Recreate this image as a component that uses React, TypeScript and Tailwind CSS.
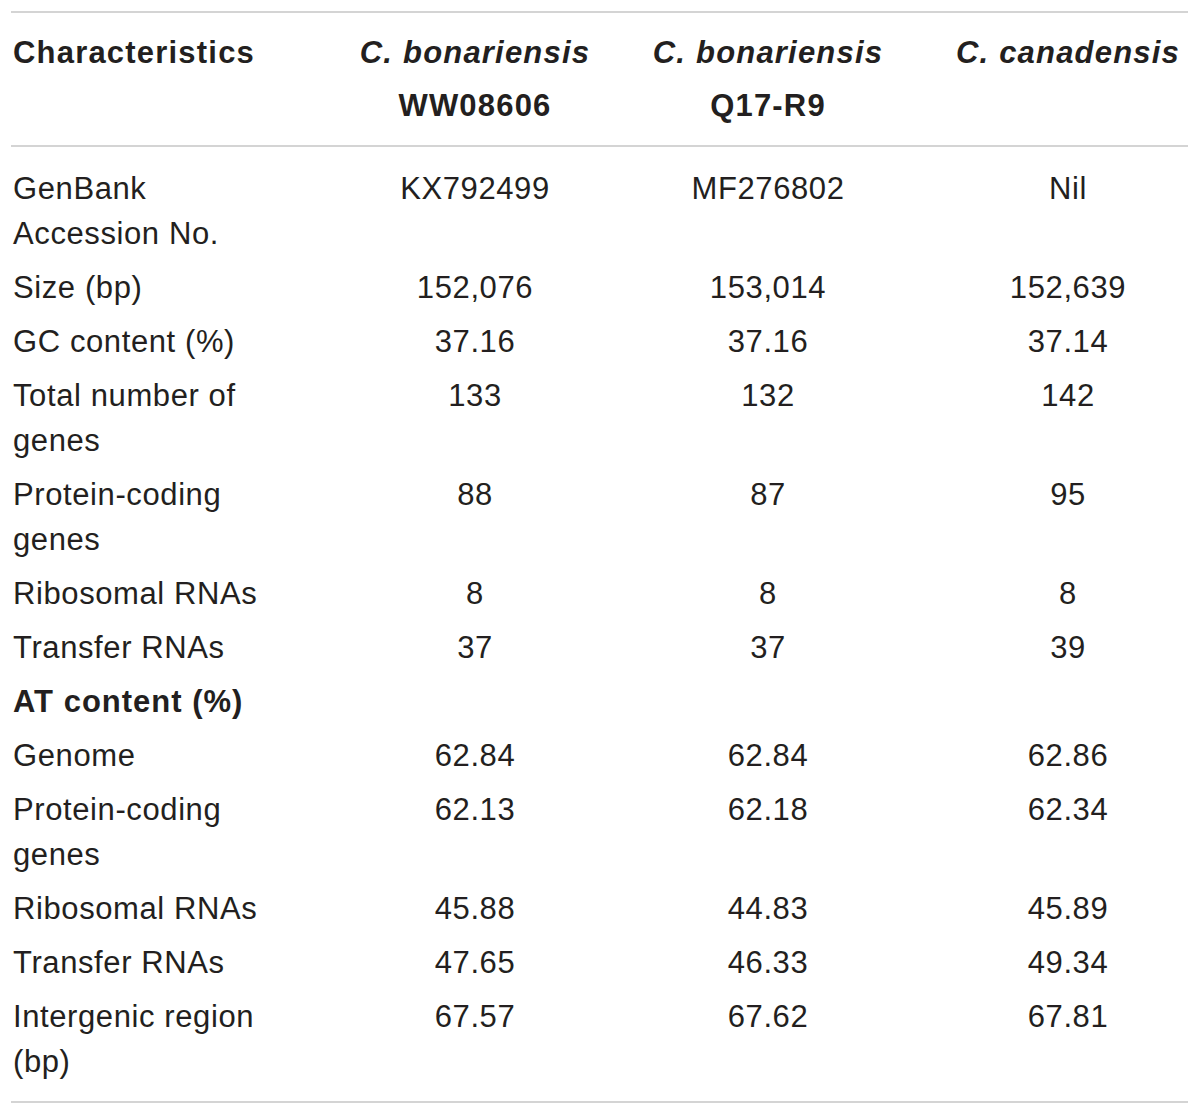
const rows: { label: string[]; vals: string[]; bold?: boolean }[] = [
  { label: ['GenBank', 'Accession No.'], vals: ['KX792499', 'MF276802', 'Nil'] },
  { label: ['Size (bp)'], vals: ['152,076', '153,014', '152,639'] },
  { label: ['GC content (%)'], vals: ['37.16', '37.16', '37.14'] },
  { label: ['Total number of', 'genes'], vals: ['133', '132', '142'] },
  { label: ['Protein-coding', 'genes'], vals: ['88', '87', '95'] },
  { label: ['Ribosomal RNAs'], vals: ['8', '8', '8'] },
  { label: ['Transfer RNAs'], vals: ['37', '37', '39'] },
  { label: ['AT content (%)'], vals: ['', '', ''], bold: true },
  { label: ['Genome'], vals: ['62.84', '62.84', '62.86'] },
  { label: ['Protein-coding', 'genes'], vals: ['62.13', '62.18', '62.34'] },
  { label: ['Ribosomal RNAs'], vals: ['45.88', '44.83', '45.89'] },
  { label: ['Transfer RNAs'], vals: ['47.65', '46.33', '49.34'] },
  { label: ['Intergenic region', '(bp)'], vals: ['67.57', '67.62', '67.81'] },
];

const grid = 'grid grid-cols-[319px_290px_296px_272px]';

export default function App() {
  return (
    <div className="min-h-[1116px] bg-white pt-[11px] pl-[11px] text-[#231f20] text-[31px] tracking-[0.6px] font-['Liberation_Sans',Arial,sans-serif]">
      <div className="w-[1177px] border-t-2 border-b-2 border-[#d4d4d4]">
        <div className={`${grid} border-b-2 border-[#d4d4d4] pt-[13px] pb-[13px] font-bold tracking-[1.2px] leading-[53px]`}>
          <div className="pl-[2px]">Characteristics</div>
          <div className="text-center">
            <div className="italic">C. bonariensis</div>
            <div>WW08606</div>
          </div>
          <div className="text-center">
            <div className="italic">C. bonariensis</div>
            <div>Q17-R9</div>
          </div>
          <div className="text-center pl-8">
            <div className="italic">C. canadensis</div>
          </div>
        </div>
        <div className="pt-[14px] pb-[13px] leading-[45px]">
          {rows.map((r, i) => (
            <div key={i} className={`${grid} py-[4.5px]`}>
              <div className={`pl-[2px] ${r.bold ? 'font-bold tracking-[1px]' : ''}`}>
                {r.label.map((l) => (
                  <div key={l}>{l}</div>
                ))}
              </div>
              <div className="text-center">{r.vals[0]}</div>
              <div className="text-center">{r.vals[1]}</div>
              <div className="text-center pl-8">{r.vals[2]}</div>
            </div>
          ))}
        </div>
      </div>
    </div>
  );
}
